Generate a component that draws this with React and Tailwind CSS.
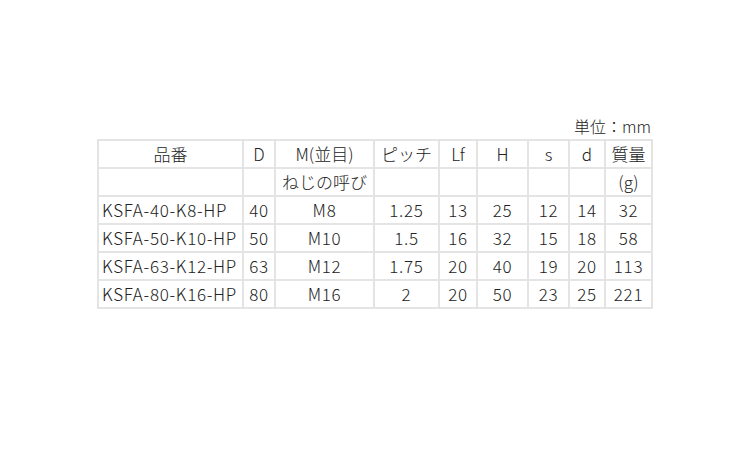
const widths = [145, 32, 99, 65, 38, 51, 41, 36, 47]

const header = ['品番', 'D', 'M(並目)', 'ピッチ', 'Lf', 'H', 's', 'd', '質量']
const sub = ['', '', 'ねじの呼び', '', '', '', '', '', '(g)']

const rows = [
  ['KSFA-40-K8-HP', '40', 'M8', '1.25', '13', '25', '12', '14', '32'],
  ['KSFA-50-K10-HP', '50', 'M10', '1.5', '16', '32', '15', '18', '58'],
  ['KSFA-63-K12-HP', '63', 'M12', '1.75', '20', '40', '19', '20', '113'],
  ['KSFA-80-K16-HP', '80', 'M16', '2', '20', '50', '23', '25', '221'],
]

const cell = 'h-[28px] border-2 border-[#e4e4e4] p-0 text-center align-middle whitespace-nowrap'

export default function App() {
  return (
    <div
      className="w-[750px] h-[450px] bg-white flex flex-col items-center pt-[114px] text-[17px] font-light text-[#222]"
      style={{ fontFamily: '"Noto Sans CJK JP", "Noto Sans", sans-serif' }}
    >
      <div className="w-[556px] text-right leading-[24px] pr-[2px] text-[16px]">単位：mm</div>
      <table className="table-fixed border-collapse w-[556px] mt-[1px]">
        <colgroup>
          {widths.map((w, i) => (
            <col key={i} style={{ width: w }} />
          ))}
        </colgroup>
        <tbody>
          <tr>
            {header.map((h, i) => (
              <td key={i} className={cell}>{h}</td>
            ))}
          </tr>
          <tr>
            {sub.map((h, i) => (
              <td key={i} className={cell}>{h}</td>
            ))}
          </tr>
          {rows.map(r => (
            <tr key={r[0]} className="tracking-[0.7px]">
              {r.map((v, i) => (
                <td key={i} className={i === 0 ? `${cell} !text-left pl-[3px]` : cell}>{v}</td>
              ))}
            </tr>
          ))}
        </tbody>
      </table>
    </div>
  )
}
